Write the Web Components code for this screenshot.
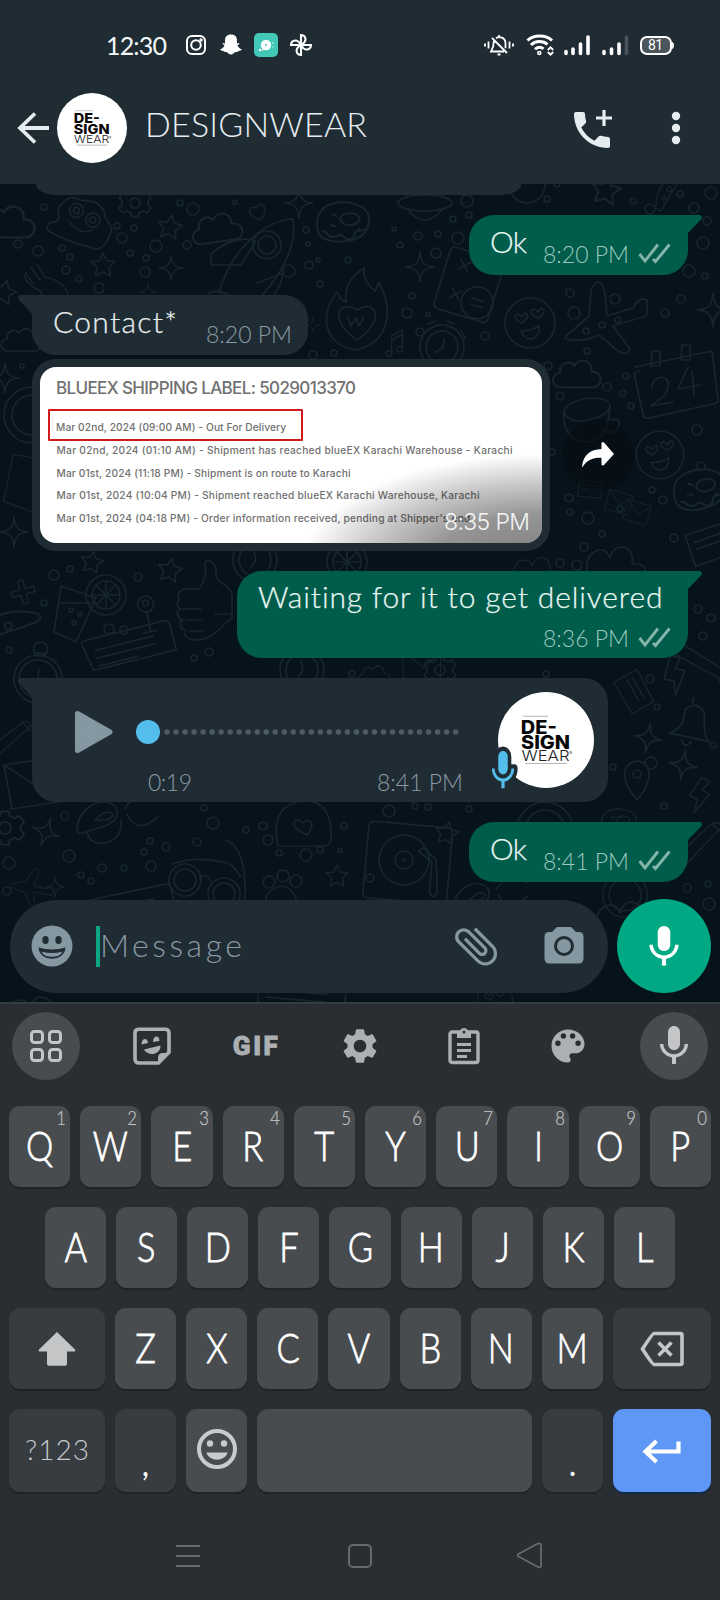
<!DOCTYPE html>
<html lang="en">
<head>
<meta charset="utf-8">
<title>DESIGNWEAR</title>
<style>
html,body{margin:0;padding:0;background:#292e32}
body{width:720px;height:1600px;overflow:hidden;font-family:Lato,"Liberation Sans",sans-serif}
</style>
</head>
<body>
<phone-screen></phone-screen>
<script>
const MIC = '<path d="M12 14c1.66 0 3-1.34 3-3V5c0-1.66-1.34-3-3-3S9 3.34 9 5v6c0 1.66 1.34 3 3 3z"/><path d="M17.3 11c0 3-2.54 5.1-5.3 5.1S6.7 14 6.7 11H5c0 3.41 2.72 6.23 6 6.72V21h2v-3.28c3.28-.48 6-3.3 6-6.72z"/>';

function define(name, html, setup) {
  customElements.define(name, class extends HTMLElement {
    connectedCallback() {
      if (this.shadowRoot) return;
      const root = this.attachShadow({ mode: 'open' });
      const t = document.createElement('template');
      t.innerHTML = typeof html === 'function' ? html(this) : html;
      root.append(t.content.cloneNode(true));
      if (setup) setup(this, root);
    }
  });
}

/* One line of text, tracked out or in to a given width */
define('fit-text', '<style>:host{display:inline-block;line-height:1;white-space:nowrap;flex:none}span{display:inline-block}</style><span><slot></slot></span>', (el, root) => {
  const w = parseFloat(el.getAttribute('w'));
  const s = root.querySelector('span');
  const natural = s.getBoundingClientRect().width;
  const n = el.textContent.length - 1;
  s.style.letterSpacing = ((w - natural) / n) + 'px';
  el.style.width = w + 'px';
});

/* Brand avatar */
define('brand-avatar', `<style>:host{display:block;flex:none}svg{display:block;width:100%;height:100%}text{font-family:Inter,Lato,sans-serif}</style>
<svg viewBox="0 0 96 96"><circle cx="48" cy="48" r="48" fill="#fff"/>
<path d="M25 24.300h25" stroke="#c0c0c0" stroke-width="1.200"/><path d="M27 71.500h42" stroke="#b5b5b5" stroke-width="1.200"/>
<g font-weight="800" font-size="18.500" fill="#080808"><text x="22.800" y="41.500" textLength="36" lengthAdjust="spacingAndGlyphs">DE-</text><text x="23" y="56.500" textLength="49" lengthAdjust="spacingAndGlyphs">SIGN</text></g>
<text x="23.500" y="69" font-size="15" font-weight="300" fill="#222" textLength="48" lengthAdjust="spacingAndGlyphs">WEAR</text><text x="71.300" y="63" font-size="4.500" fill="#444">®</text></svg>`);

/* System status bar */
define('status-bar', `<style>
:host{display:flex;height:90px;align-items:flex-start;color:#f4f7f8}
.l{display:flex;padding:31px 0 0 106px;gap:0;flex:1;align-items:center;height:28px}
.l fit-text{font:400 25px/1 Lato,sans-serif}
svg{display:block;flex:none}
.l svg:nth-of-type(1){margin-left:18px}
.l svg+svg{margin-left:13px}
.r{display:flex;align-items:center;padding:31px 45px 0 0;height:28px}
</style>
<div class="l"><fit-text w="61">12:30</fit-text>
<svg width="22" height="22" viewBox="0 0 22 22" fill="none" stroke="#fff" stroke-width="2"><rect x="2" y="2" width="18" height="18" rx="5"/><circle cx="11" cy="11" r="4.800"/><circle cx="16" cy="6" r=".8"/></svg>
<svg width="22" height="22" viewBox="0 0 22 22" fill="#fff"><path d="M11 .500c4.300 0 6 2.600 6 6v3l2-.6c1 .3.500 1.200-1.500 2 .5 2.300 2.300 3.800 4.300 4.300-.3 1.500-1.800 1.300-3.200 1.600-.3 1.500-1.600 1-2.800 1.100-1.800.2-2.600 2.700-4.800 2.700s-3-2.500-4.800-2.700c-1.200-.1-2.500.4-2.800-1.100-1.400-.3-2.900-.1-3.200-1.600 2-.5 3.800-2 4.300-4.300-2-.8-2.500-1.700-1.500-2l2 .6v-3c0-3.400 1.700-6 6-6z"/></svg>
<svg width="24" height="24" viewBox="0 0 24 24" style="margin-left:12px"><rect width="24" height="24" rx="5" fill="#41c8b6"/><circle cx="12" cy="12" r="5.200" fill="#fff"/><path d="M7 18l3-4 2 2zM17 7l2-1.500" fill="#fff"/><circle cx="6" cy="17" r="1.300" fill="#fff"/><path d="M18 10h1.500M18.500 14h1" stroke="#fff"/><circle cx="12" cy="12" r="1" fill="#41c8b6"/></svg>
<svg width="24" height="24" viewBox="0 0 24 24" style="margin-left:11px" fill="none" stroke="#fff" stroke-width="2.100"><path d="M12 12V2c4 0 5.800 4 3.500 7.200C14.500 10.500 13 11.500 12 12zh10c0 4-4 5.800-7.200 3.500C13.500 14.500 12.500 13 12 12zv10c-4 0-5.800-4-3.500-7.200C9.500 13.500 11 12.500 12 12zH2c0-4 4-5.800 7.200-3.500C10.500 9.500 11.500 11 12 12z"/></svg></div>
<div class="r">
<svg width="32" height="24" viewBox="0 0 32 24" fill="none" stroke="#fff" stroke-width="1.800"><path d="M2 10.500v3M5.500 8.500v7M30 10.500v3M26.500 8.500v7M9 5l15 15M11 8c-.6 1.500-.7 3-.7 5L8 18.500H21M13 5.300c3-2.300 9.500-1 9.500 5v5M16 2v2M14.500 21.500h3"/></svg>
<svg width="28" height="24" viewBox="0 0 28 24" style="margin-left:11px" fill="none" stroke="#fff" stroke-width="3"><path d="M1.500 7.500c6-6 18.500-6 24.500 0M5 12c4.500-4.500 12-4.500 16.500-.5M9 16.200c2.500-2.500 6-2.500 8.500-.3"/><circle cx="13.300" cy="20" r=".8"/><path d="M21.800 17l2.700-2.700 2.700 2.700M21.800 19l2.700 2.700 2.700-2.700" stroke-width="1.900"/></svg>
<svg width="28" height="24" viewBox="0 0 28 24" style="margin-left:9px" stroke="#fff" stroke-width="3.600" stroke-linecap="round"><path d="M3 18.500v2M10 16v4.500M17.500 11v9.500M25 4v16.500"/></svg>
<svg width="28" height="24" viewBox="0 0 28 24" style="margin-left:10px" stroke="#fff" stroke-width="3.600" stroke-linecap="round"><path d="M3 18.500v2M10.500 16v4.500M18 11v9.500"/><path d="M25.500 4v16.500" stroke="#47525a"/></svg>
<svg width="36" height="22" viewBox="0 0 36 22" style="margin-left:10px"><rect x="2" y="3" width="30" height="17" rx="6" fill="#4c555b" stroke="#fff" stroke-width="2"/><path d="M33 8.500c1.300 1.500 1.300 4 0 6" stroke="#fff" stroke-width="1.800" fill="none"/><text x="9" y="16.300" font-size="14" font-family="Roboto" fill="#fff" textLength="15">81</text></svg>
</div>`);

/* Conversation header */
define('chat-header', `<style>
:host{display:flex;height:94px;color:#e6edf0;align-items:flex-start;padding-left:17px}
svg{display:block;flex:none}
brand-avatar{width:70px;height:70px;margin:3px 0 0 8px}
h1{font-weight:300;font-size:34px;margin:17px 0 0 18px;line-height:1;flex:1}
</style>
<svg width="32" height="34" viewBox="0 0 32 34" style="margin-top:21px" fill="none" stroke="#e6edf0" stroke-width="3.800"><path d="M18 2.500L3 17l15 14.500M3 17h29"/></svg>
<brand-avatar></brand-avatar>
<h1><fit-text w="222">DESIGNWEAR</fit-text></h1>
<svg width="48" height="48" viewBox="0 0 48 48" style="margin-top:16px" fill="#e6edf0"><path transform="scale(2)" d="M20 15.500c-1.250 0-2.450-.2-3.570-.57-.35-.11-.74-.03-1.020.24l-2.200 2.200c-2.830-1.440-5.150-3.750-6.590-6.590l2.200-2.210c.28-.26.36-.65.25-1C8.700 6.450 8.500 5.250 8.500 4c0-.55-.45-1-1-1H4c-.55 0-1 .45-1 1 0 9.390 7.610 17 17 17 .55 0 1-.45 1-1v-3.500c0-.55-.45-1-1-1z"/><path d="M36 4v16M28 12h16" stroke="#e6edf0" stroke-width="3.200"/></svg>
<svg width="10" height="34" viewBox="0 0 10 34" style="margin:21px 39px 0 55px" fill="#e6edf0"><circle cx="5" cy="5" r="4.200"/><circle cx="5" cy="17" r="4.200"/><circle cx="5" cy="29" r="4.200"/></svg>`);

/* Doodle wallpaper */
function wallpaper() {
  const o = [];
  const at = (x, y, s, r, d) => o.push(`<g transform="translate(${x} ${y}) rotate(${r}) scale(${s})">${d}</g>`);
  const p = d => `<path d="${d}"/>`, c = (x, y, r) => `<circle cx="${x}" cy="${y}" r="${r}"/>`;
  const K = {
    star: p('M0-12l3.500 7.500 8.500 1-6 6 1.500 8.500L0 7l-7.500 4L-6 2.500l-6-6 8.500-1z'),
    spark: p('M0-15C1-4 4-1 14 0 4 1 1 4 0 15-1 4-4 1-14 0-4-1-1-4 0-15z'),
    cloud: p('M-14 11c-9 0-9-11-1-12-1-8 8-11 12-6 5-8 16-3 14 5 11 0 10 13 1 13z'),
    heart: p('M0 9C-16-1-6-12 0-5 6-12 16-1 0 9z'),
    gear: c(0, 0, 5) + p('M-3-14h6l1 4 4 2 4-2 4 5-3 3v4l3 3-4 5-4-2-4 2-1 4h-6l-1-4-4-2-4 2-4-5 3-3v-4l-3-3 4-5 4 2 4-2z'),
    smile: c(0, 0, 25) + p('M-8 0c-13-5-5-13 0-6 3-8 11-1 0 6zM8-5c-13-5-5-13 0-6 3-8 12-1 0 6zM-9 8q10 0 18-5c2 15-15 17-18 5z'),
    donut: p('M-20-12c10-12 40-8 40 7 0 9-4 14-12 17-14 4-30 2-31-9-1-6 0-11 3-15z') + p('M-19 5c5 0 4 5 9 5s5-4 9 0 9 1 9-3 9 0 11-6') + `<ellipse cx="4" cy="-5" rx="8" ry="5"/>` + p('M-10-9l3 2M-12 0l4 1M12 3l-3 3'),
    clock: c(0, 0, 22) + c(0, 0, 16) + p('M-1-9l2 9-5 7M-15-22l-6 5M12-22l7 6M-4-26h8'),
    glass: p('M-17-24L18-12-2 32-24 22zM-17-7h35') + c(-7, 0, 2) + c(2, 4, 2) + c(-4, 13, 2),
    orange: c(0, 0, 20) + c(0, 0, 14) + p('M0-14v28M-14 0h28M-10-10l20 20M10-10l-20 20'),
    thumb: p('M-25 0c-3-8 3-12 10-11h10c6-8 8-17 6-27 8-6 12 7 11 15 3 5 14 10 16 17v25c-8 2-9 10-20 16-5 3-10 5-16 5-12 0-13-8-10-10-6 0-8-8-3-10-7-2-7-10-2-11-4-2-5-6-2-9zM-21 9h18M-18 20h16M-15 31h14M11 14h16'),
    card: p('M-45-14q-2-6 4-6h80q6 0 6 6v25H-40zM-34-8h60M-34 0h60M-34 8h40'),
    ufo: p('M-30 8C-28-8-14-20 0-18 14-14 14 0-2 6l-22 7q-7 2-6-5zM-12 0q12-12 18-6-2 8-18 6zM-20 12c4 20 38 12 34-12M18-12q16-22 34-7M20-6q10 22 32 2'),
    glasses: c(-20, 0, 16) + c(-20, 0, 11) + c(19, 14, 16) + c(19, 14, 11) + p('M-6-2q8-6 12 4M-32-16q20-8 50-2c10 1 12 8 18 15M20-40q22 6 20 60'),
    plane: p('M-6-30q10-18 14 4l2 22 26-8q6-12 14-8v9q2 6-4 8L16 6l17 23q-4 8-12 2L2 15q-12 6-26 5-14 0-2-8L-8-4z'),
    cal: p('M-37-8L40-24l6 48q1 4-5 5l-64 14q-5 1-6-4l-8-36q-2-6 4-7M-20-24h8v15h-9zM10-30h8v15h-9z') + p('M-20 13c0-14 18-14 16-2 0 10-10 14-17 20l22-4M16-8L6 14l22-4M20-4l2 24'),
    cup: p('M-26-8q2-10 24-14 22 0 22 8-2 26-12 32-12 8-24 0-12-8-10-26zM-26-8q4 12 24 8 20-4 22-14M20 0q13-3 8 8-6 8-14 2'),
    rocket: p('M-28 30C-20-2 10-42 46-44 52-10 20 34-2 46M-28 30q14 0 26 16M-36-9q24-20 45-13L-6 2h-30zM14 42q20-12 22-32L10 20') + c(20, -18, 14) + c(20, -18, 9) + p('M-46 48q4-26 24-18 15 6 13 22'),
    flame: p('M0 40c-34-4-38-36-20-58 4 8 5 9 9 10-2-17 6-26 18-34-2 12 6 19 11 23l4-8c14 25 12 58-22 67z') + p('M0 30C-30 10-18-12 0 0 18-12 30 10 0 30zM-9 7l3 9 5-8 3 8 5-9'),
    rocketbag: p('M-24 22q-8-36 18-44 28-6 34 20 4 22-4 24zM-4 6c-10-8 0-14 5-7 6-7 14 1 4 12z'),
    turntable: p('M-38-30q0-6 6-6h72q6 0 6 6v66q0 5-5 5h-74q-5 0-5-5z') + c(0, 0, 25) + c(0, 0, 9) + c(0, 0, 1) + p('M14-10l14 10v30q4 8 8 0L32-3 18-14z'),
    bell: p('M-16 12Q-4 4-8-12 0-24 10-14 14 6 20 10zM-4 15q5 8 9-1M-3-20v-5'),
    pin: p('M0 20Q-18-2-10-14q10-10 20 0 7 14-10 34z') + c(0, -6, 4),
    bag: p('M-26-28h50l8 20-16 48-44-8z'),
    env: p('M-28-18l54-8 6 44-52 8zM-28-18L6 4l20-30'),
    bolt: p('M-8-18h10L-1-6h10L4 20l-4-14h-10z'),
    watch: c(0, 0, 24) + c(0, 0, 19) + c(0, -30, 7) + p('M-4-22v-4h8v4M0-10v14M0 4l8-6'),
    paw: p('M-16 20q-6-16 14-22 16 2 16 22z') + c(-14, -6, 6) + c(0, -12, 6) + c(13, -7, 6),
    poop: p('M-22 20q-10-2-4-10 10-2 6-10-3-6 2-12 6-10 18-6 16-4 24 6 2 6 6 10 8 4 4 14-3 18-16 14-25-1-40-6z') + c(-3, -7, 7) + c(-3, -7, 3) + c(15, -1, 7) + c(15, -1, 3) + p('M-8 5q12 12 24 4'),
    planet: `<ellipse rx="27" ry="8"/>` + p('M-18-6q2-16 18-16t18 16M-16 8q16 18 32 0'),
    moon: p('M-16-6a18 18 0 1 0 24-16 20 20 0 0 1-24 16z'),
    note: p('M-6 12V-8l12-7v20M-6-3l12-7') + c(-9, 12, 3) + c(3, 7, 3),
    calc: p('M-24-32h46q5 0 5 5v54q0 5-5 5h-46q-5 0-5-5v-54q0-5 5-5zM-16-22l10 10M-6-22l-10 10M6-17h12M-16 8l10 10M-6 8l-10 10') + c(12, 15, 16) + p('M6 12h12M6 18h12'),
    fist: p('M-30 30q-8-20 4-28 12-6 16 6 4-14 16-10 8 4 6 16 14-2 14 12'),
    wine: c(0, -8, 8) + c(0, -9, 3) + p('M0 0v20M-7 20h14'),
    plus: p('M-3-13h6v10h10v6H3v10h-6V3h-10v-6h10z'),
    pizza: p('M-22 16q10-30 44-34 6 2 0 8L-18 22z') + c(2, 0, 3) + c(-8, 8, 2),
    hand: p('M-16-8l8 12M-10-14l10 14M-3-17l9 14M6-3q24 4 28 28M-16-8q-4 10 16 20l6 10'),
    book: p('M-26-12l44-10 8 30-44 12zM-18-4l28-7M-16 3l28-7'),
    pencil: p('M-40 16L24-18q8-2 10 6L-28 26l-14 2zM24-18l8 12'),
    ring: c(0, 0, 28) + c(0, 0, 20)
  };
  const items = [
    ['star',170,227,1,10],['star',103,265,1,0],['star',4,292,1,15],['star',170,570,1,10],['star',92,562,.9,10],['star',337,876,.9,0],['star',447,833,.95,10],['star',606,190,1.2,10],
    ['spark',299,203,1,0],['spark',171,268,.85,0],['spark',14,532,1,0],['spark',420,267,1,0],['spark',713,310,1.1,0],['spark',46,832,1,20],['spark',55,887,.7,0],['spark',648,738,1,10],['spark',683,765,1,10],['spark',148,292,.6,0],['spark',313,325,.5,0],
    ['cloud',218,228,1.250,-8],['cloud',8,222,1.400,0],['cloud',22,340,1,0],['cloud',578,374,1.200,0],['cloud',375,675,.8,0],
    ['gear',135,203,1,0],['gear',5,828,1.200,0],['heart',258,212,.9,-25],['poop',78,218,1,12],['rocket',247,263,1,0],['donut',345,225,1.200,0],['donut',702,492,1.200,-10],['flame',357,310,1,0],['hand',40,280,.9,0],
    ['planet',425,203,1,0],['moon',525,190,1,0],['pizza',668,190,.8,-20],['calc',470,285,1,17],['smile',530,323,1,0],['smile',660,455,.95,0],['clock',442,347,1,20],['note',397,343,.9,0],['plane',597,320,1,0],['cal',672,375,1,0],['cup',590,420,1,0],['fist',620,550,1,0],['book',712,545,1,-5],
    ['glass',78,610,1,0],['orange',106,595,1,0],['wine',147,612,1,-10],['thumb',204,600,1,0],['card',130,650,1,-14],['watch',38,679,1,5],['clock',302,670,1,0],['pizza',6,625,1.200,20],['plus',23,592,.9,-15],
    ['ufo',107,820,1,0],['rocketbag',302,824,1,0],['glasses',205,880,1,0],['paw',283,888,1,0],['env',32,783,1,0],['pencil',6,740,.8,-10],['turntable',404,860,1,5],['bell',690,725,1.100,15],['pin',637,780,1,0],['bolt',675,675,1,10],
    ['book',633,692,.8,75],['donut',620,824,.8,0],['ring',545,830,1,0],['fist',630,905,1,0],['pencil',695,845,.9,-15],['card',130,912,1,-12],['ring',32,415,1,0],['bag',30,480,.8,10],['pencil',700,660,.9,60],['clock',255,560,1,0],['orange',347,562,1,0],['gear',440,670,1,0],['fist',540,560,.8,0],['spark',5,378,1,0],['book',590,490,.5,20],['env',618,502,.45,25],['env',636,512,.45,25],['smile',495,1000,.7,0],['fist',40,1000,1,0],['card',300,1000,1,5],['plane',28,885,.5,30],['env',420,665,.7,8],['ring',625,895,.8,0],['ufo',480,900,.9,0],['bolt',700,795,.9,30]
  ];
  for (const [k, x, y, s, r] of items) if (K[k]) at(x, y, s, r, K[k]);
  const dots = '44,207,3 193,209,6 180,203,3 235,202,2 117,226,3 134,228,3 122,238,5 156,246,6 187,245,4 62,248,3 18,244,4 38,251,5 70,257,3 66,270,4 79,279,3 99,288,5 130,253,3 146,258,3 145,272,5 306,230,3 308,244,2 318,260,2 309,265,4 289,271,6 348,260,3 320,284,3 313,355,4 334,353,3 22,366,2 467,201,6 469,215,3 453,219,3 394,229,2 418,236,4 438,234,3 458,238,6 400,245,3 436,253,5 547,199,3 557,184,3 633,201,3 650,209,5 680,194,3 711,193,6 694,208,5 707,221,4 703,243,6 689,271,6 705,276,3 412,296,3 407,313,5 428,314,2 485,336,4 420,332,4 570,293,4 574,313,6 615,299,5 602,325,3 618,320,3 586,331,3 665,313,4 681,299,4 587,351,3 548,366,4 626,376,3 607,387,4 623,393,3 631,406,3 560,396,4 552,452,3 697,430,5 701,466,4 569,498,4 570,512,3 588,518,6 652,490,3 663,500,4 620,509,3 602,534,3 674,538,4 584,547,4 54,575,5 70,569,3 138,577,4 44,603,3 109,629,5 124,630,4 9,650,3 194,658,3 209,652,4 352,674,3 65,816,4 204,808,3 213,823,6 246,830,3 263,826,4 268,840,5 279,853,3 306,855,6 320,850,3 340,850,2 344,826,3 150,841,3 166,847,4 197,842,4 144,852,3 69,856,6 102,868,4 124,868,3 151,866,5 81,875,3 91,881,3 9,863,6 7,891,4 650,679,4 657,707,3 546,674,3 713,745,3 651,763,6 613,767,3 664,806,3 389,811,6 415,806,3 428,807,3 469,809,3 370,878,4 687,888,4 708,884,3 709,904,6 698,609,4 711,618,4 703,636,4 560,563,4 577,565,5';
  for (const d of dots.split(' ')) { const [x, y, r] = d.split(','); o.push(c(x, y, r)); }
  return o.join('');
}
define('doodle-wallpaper', () => `<style>:host{display:block;position:absolute;inset:0;background:#06131a;overflow:hidden}svg{display:block}</style>
<svg width="720" height="818" viewBox="0 184 720 818" fill="none" stroke="#17252c" stroke-width="1.700" stroke-linejoin="round" stroke-linecap="round">${wallpaper()}</svg>`);

define('double-tick', `<style>:host{display:block;flex:none}svg{display:block}</style><svg width="34" height="22" viewBox="0 0 34 22" fill="none" stroke="#83b5a9" stroke-width="2.900"><path d="M1.500 12l5.500 7L20 2.500M15 17l2.500 2.500L31.500 2.500"/></svg>`);

/* Message bubble: the side attribute says who sent it */
define('chat-bubble', `<style>
:host{display:flex;position:relative;box-sizing:border-box;align-self:flex-start;margin-left:32px;background:#1f2c34;color:#e6edf0;border-radius:24px;--stamp:#8b9ba4}
:host([side=out]){align-self:flex-end;margin-left:0;margin-right:32px;background:#005c4b;color:#e9f7f2;border-radius:25px 0 25px 25px;--stamp:#9ac8bd}
:host([side=in]){border-top-left-radius:0}
svg{position:absolute;top:0;display:none}
:host([side=out]) .o{display:block;left:calc(100% - 1px)}
:host([side=in]) .i{display:block;right:calc(100% - 1px)}
</style><svg class="o" width="16" height="22" viewBox="0 0 16 22"><path d="M0 0h13q3 1 1.500 4L1 18v2H0z" fill="#005c4b"/></svg><svg class="i" width="16" height="22" viewBox="0 0 16 22"><path d="M16 0H3Q-.5 1 1.500 4.500L15 19v2h1z" fill="#1f2c34"/></svg><slot></slot>`);

define('time-stamp', el => `<style>:host{display:flex;font-size:23px;font-weight:300;color:var(--stamp,#8496a0);gap:9px;line-height:1}fit-text{height:23px;margin-top:1px}</style><fit-text w="86">${el.getAttribute('time')}</fit-text>${el.hasAttribute('ticks') ? '<double-tick></double-tick>' : ''}`);

define('text-message', el => `<style>
:host{display:flex;flex:1;padding:11px 0 0 21px;justify-content:space-between}
fit-text{font-size:30px;font-weight:300;-webkit-text-stroke:.25px}
time-stamp{margin:16px 0 0}
:host([ticks]) time-stamp{margin-right:16px}
:host(:not([ticks])) time-stamp{margin-right:16px}
:host([wide]){flex-direction:column;padding-top:10px;justify-content:flex-start}
:host([wide]) time-stamp{align-self:flex-end;margin-top:15px}
</style><fit-text w="${el.getAttribute('w')}">${el.getAttribute('text')}</fit-text><time-stamp time="${el.getAttribute('time')}" ${el.hasAttribute('ticks') ? 'ticks' : ''}></time-stamp>`);

/* Photo message holding the tracking label */
define('label-photo', `<style>
:host{display:block;position:relative;width:502px;height:176px;margin:8px;border-radius:16px;background:#fff;overflow:hidden;color:#707070;font-family:Inter,sans-serif}
h2{margin:13px 0 0 16px;font:500 17px/1 Inter,sans-serif;color:#707070;height:17px}
ol{list-style:none;margin:12px 0 0 8px;padding:0}
li{height:22.700px;padding-left:8.500px;font-size:10.200px;font-weight:500;line-height:1;box-sizing:border-box;display:flex;align-items:flex-start;padding-top:4px}
li:first-child{height:32px;width:255px;border:2.500px solid #d01a1c;padding:11px 0 0 6px;margin-bottom:0;border-radius:1px}
.shade{position:absolute;inset:0;background:radial-gradient(ellipse 240px 110px at 100% 112%,rgba(0,0,0,.5),rgba(0,0,0,.42) 45%,rgba(0,0,0,.2) 75%,transparent)}
time-stamp{position:absolute;right:12px;bottom:9px;--stamp:#f3f5f6}
</style><h2><fit-text w="300">BLUEEX SHIPPING LABEL: 5029013370</fit-text></h2>
<ol><li><fit-text w="230">Mar 02nd, 2024 (09:00 AM) - Out For Delivery</fit-text></li><li><fit-text w="456">Mar 02nd, 2024 (01:10 AM) - Shipment has reached blueEX Karachi Warehouse - Karachi</fit-text></li><li><fit-text w="294">Mar 01st, 2024 (11:18 PM) - Shipment is on route to Karachi</fit-text></li><li><fit-text w="423">Mar 01st, 2024 (10:04 PM) - Shipment reached blueEX Karachi Warehouse, Karachi</fit-text></li><li><fit-text w="417">Mar 01st, 2024 (04:18 PM) - Order information received, pending at Shipper's end.</fit-text></li></ol>
<div class="shade"></div><time-stamp time="8:35 PM"></time-stamp>`);

define('voice-note', `<style>
:host{display:flex;flex:1;padding:0 14px 0 43px;color:#8b9ba4}
.play{margin-top:32px;flex:none;display:block}
.mid{width:318px;margin-left:17px;flex:none}
.mid>svg{display:block;margin-top:41px}
.t{display:flex;justify-content:space-between;font-size:23px;font-weight:300;margin:25px -13px 0 16px}
.t>fit-text{margin-top:1px}
.a{position:relative;margin:14px 0 0 auto;width:96px;height:96px}
brand-avatar{width:96px;height:96px}
.a svg{position:absolute;left:-14px;top:55px;overflow:visible}
</style>
<svg class="play" width="40" height="44" viewBox="0 0 40 44"><path d="M2.500 3.500v37L35 22z" fill="#8597a1" stroke="#8597a1" stroke-width="5" stroke-linejoin="round"/></svg>
<div class="mid"><svg width="330" height="26" viewBox="0 0 330 26"><path d="M35 13H324" stroke="#4d5b63" stroke-width="5.500" stroke-linecap="round" stroke-dasharray="0 9.020"/><circle cx="16" cy="13" r="12" fill="#53bdeb"/></svg>
<div class="t"><fit-text w="44">0:19</fit-text><time-stamp time="8:41 PM"></time-stamp></div></div>
<div class="a"><brand-avatar></brand-avatar><svg width="38" height="47" viewBox="0 0 24 24" preserveAspectRatio="none" fill="#53bdeb"><g stroke="#1f2c34" stroke-width="4.500" stroke-linejoin="round">${MIC}</g>${MIC}</svg></div>`);

define('message-input', `<style>
:host{display:flex;padding:0 9px 0 10px;margin-top:17px;gap:9px;align-items:center;position:relative}
.f{display:flex;align-items:center;width:598px;height:93px;border-radius:46.500px;background:#1f2c34;color:#8b9ba4;margin-top:1px}
svg{display:block;flex:none}
i{width:4px;height:41px;background:#0aa683;margin-left:23px}
fit-text{font-size:32px;font-weight:300;margin-top:-4px}
.m{width:94px;height:94px;border-radius:50%;background:#00a884;display:grid;place-items:center}
</style><div class="f">
<svg width="42" height="42" viewBox="0 0 42 42" style="margin-left:21px;margin-top:-1px" fill="#8597a1"><circle cx="21" cy="21" r="20.500"/><g fill="#1f2c34"><ellipse cx="14.500" cy="15" rx="3.200" ry="4"/><ellipse cx="27.500" cy="15" rx="3.200" ry="4"/><path d="M7.500 22.500q13.500 4 27 0c-1 15-26 15-27 0z"/></g><path d="M10.500 26.500q10.500 3 21 0-1.200 3-4 4.200-6.500 2-13 0-2.800-1.200-4-4.200z"/></svg>
<i></i><fit-text w="142">Message</fit-text>
<svg width="52" height="52" viewBox="0 0 24 24" style="margin-left:208px;margin-top:-2px" fill="#8597a1"><path transform="rotate(-45 12 12)" d="M16.500 6v11.500c0 2.210-1.790 4-4 4s-4-1.790-4-4V5c0-1.380 1.120-2.500 2.500-2.500s2.500 1.120 2.500 2.500v10.500c0 .55-.45 1-1 1s-1-.45-1-1V6H10v9.500c0 1.380 1.120 2.500 2.500 2.500s2.500-1.120 2.500-2.500V5c0-2.210-1.790-4-4-4S7 2.790 7 5v12.500c0 3.040 2.460 5.500 5.500 5.500s5.500-2.460 5.500-5.500V6z"/></svg>
<svg width="40" height="38" viewBox="0 0 40 38" style="margin-left:42px;margin-top:-3px" fill="#8597a1"><path d="M13 1h14l5 5h3q4.500 0 4.500 5v21q0 5.500-5 5.500h-29q-5 0-5-5.500V11q0-5 4.500-5h3z"/><circle cx="20" cy="20" r="8.500" stroke="#1f2c34" stroke-width="3"/></svg>
</div><div class="m"><svg width="50" height="50" viewBox="0 0 24 24" fill="#fff"><g transform="translate(0 .4)">${MIC}</g></svg></div>`);

define('chat-thread', `<style>
:host{display:flex;flex-direction:column;position:relative;height:818px;overflow:hidden}
.prev{width:485px;height:10.500px;margin-left:36px;border-radius:0 0 22px 22px/0 0 10px 10px}
.row{display:flex;align-items:center;gap:0;position:relative}
.fwd{width:72px;height:72px;border-radius:50%;background:rgba(8,13,20,.55);display:grid;place-items:center;margin-left:12px}
</style><doodle-wallpaper></doodle-wallpaper>
<chat-bubble class="prev"></chat-bubble>
<chat-bubble side="out" style="width:219px;height:60px;margin-top:20.500px"><text-message text="Ok" w="37" time="8:20 PM" ticks></text-message></chat-bubble>
<chat-bubble side="in" style="width:276px;height:60px;margin-top:20px"><text-message text="Contact*" w="124" time="8:20 PM"></text-message></chat-bubble>
<div class="row" style="margin-top:4px;height:192px"><chat-bubble style="width:518px;height:192px"><label-photo></label-photo></chat-bubble>
<div class="fwd"><svg width="34" height="28" viewBox="0 0 34 28" fill="#fff"><path d="M1 26C2 14 9 8.500 20.500 8V2q1-1.500 2.500-.5L33 13 23 24q-2 1-2.500-.5v-6.800C11 16.500 6 19 1.500 26z"/></svg></div></div>
<chat-bubble side="out" style="width:451px;height:87px;margin-top:20px"><text-message wide text="Waiting for it to get delivered" w="405" time="8:36 PM" ticks></text-message></chat-bubble>
<chat-bubble side="in" style="width:576px;height:124px;margin-top:20px"><voice-note></voice-note></chat-bubble>
<chat-bubble side="out" style="width:219px;height:60px;margin-top:20px"><text-message text="Ok" w="37" time="8:41 PM" ticks></text-message></chat-bubble>
<message-input></message-input>`);

/* One keyboard key */
define('key-cap', el => `<style>
:host{display:flex;align-items:center;justify-content:center;flex:1 1 0;position:relative;background:#494c4f;border-radius:11px;box-shadow:0 2px 1px #1f2427;color:#fff;font-size:42px;line-height:1;min-width:0}
:host([dark]){background:#373c40}
:host([enter]){background:#5e97f6;box-shadow:0 2px 1px #12284d}
:host([side]){flex:none;width:96px}
:host([side=r]){width:98px}
b{position:absolute;right:4px;top:2px;font-size:19px;font-weight:300;color:#c3c6c8;-webkit-text-stroke:.2px}
b i{display:block;font-style:normal;transform:scaleX(.88);transform-origin:100% 0}
span{transform:scaleX(.82);font-weight:300;-webkit-text-stroke:.8px;margin-top:-4px}
</style>${el.getAttribute('hint') ? `<b><i>${el.getAttribute('hint')}</i></b>` : ''}${el.getAttribute('k') ? `<span>${el.getAttribute('k')}</span>` : ''}<slot></slot>`);

define('key-board', () => {
  const keys = (s, h) => [...s].map((k, i) => `<key-cap k="${k}" ${h ? `hint="${h[i]}"` : ''}></key-cap>`).join('');
  return `<style>
:host{display:flex;flex-direction:column;height:598px;background:#292e32;border-top:2px solid #333c41;box-sizing:border-box}
svg{display:block}
.bar{display:flex;justify-content:space-between;padding:8px 12px 0;height:68px}
.bar>div{width:68px;height:68px;border-radius:50%;display:grid;place-items:center}
.bar .on{background:#494c4f}
.gif{font:900 26px/1 Roboto,sans-serif;color:#adb0b3;-webkit-text-stroke:.8px}
.row{display:flex;gap:10px;padding:0 9px;height:81px;margin-top:20px}
.row:nth-of-type(2){margin-top:26px}
.row.in{padding:0 45px}
.row.last{height:83px}
.sym{font-size:28px;font-weight:300;color:#c8cacc;margin-top:-3px}
.pt{margin-top:26px;font-size:32px}
.nav{display:flex;align-items:center;padding:50px 177px 0 176px;justify-content:space-between;height:27px}
</style>
<div class="bar">
<div class="on"><svg width="34" height="34" viewBox="0 0 34 34" fill="none" stroke="#c3c5c7" stroke-width="3"><rect x="2.500" y="2.500" width="11" height="11" rx="3"/><rect x="20.500" y="2.500" width="11" height="11" rx="3"/><rect x="2.500" y="20.500" width="11" height="11" rx="3"/><rect x="20.500" y="20.500" width="11" height="11" rx="3"/></svg></div>
<div><svg width="38" height="38" viewBox="0 0 38 38" style="margin-left:3px"><path d="M6 2.200h26q4 0 4 4v19L25.500 36H6q-4 0-4-4V6q0-3.800 4-3.800z" fill="none" stroke="#adb0b3" stroke-width="3.600"/><path d="M25 37v-6q0-5 5-5h7zM8.500 17.500c0-7 6.500-7 6.500-1.500zM20 15c0-7 6.500-7 6.500-1zM11 22.500l16.500-4c0 10-13 11-16.500 4z" fill="#adb0b3"/></svg></div>
<div class="gif"><fit-text w="45">GIF</fit-text></div>
<div><svg width="42" height="42" viewBox="0 0 24 24" fill="#adb0b3"><path d="M19.140 12.940c.04-.3.06-.61.06-.94 0-.32-.02-.64-.07-.94l2.030-1.580c.18-.14.23-.41.12-.61l-1.920-3.320c-.12-.22-.37-.29-.59-.22l-2.390.96c-.5-.38-1.030-.7-1.620-.94l-.36-2.540c-.04-.24-.24-.41-.48-.41h-3.840c-.24 0-.43.17-.47.41l-.36 2.540c-.59.24-1.130.57-1.620.94l-2.390-.96c-.22-.08-.47 0-.59.22L2.740 8.870c-.12.21-.08.47.12.61l2.030 1.580c-.05.3-.09.63-.09.94s.02.64.07.94l-2.030 1.580c-.18.14-.23.41-.12.61l1.920 3.320c.12.22.37.29.59.22l2.390-.96c.5.38 1.030.7 1.620.94l.36 2.540c.05.24.24.41.48.41h3.840c.24 0 .44-.17.47-.41l.36-2.540c.59-.24 1.130-.56 1.620-.94l2.390.96c.22.08.47 0 .59-.22l1.920-3.320c.12-.22.07-.47-.12-.61zM12 15.600c-1.980 0-3.600-1.620-3.600-3.600s1.620-3.600 3.600-3.600 3.600 1.620 3.600 3.600-1.620 3.600-3.600 3.600z"/></svg></div>
<div><svg width="32" height="38" viewBox="0 0 32 38" fill="none" stroke="#adb0b3" stroke-width="3.400" style="margin-left:-2px"><rect x="2" y="5" width="28" height="30.500" rx="2"/><path d="M9 17.500h14M9 23.500h14M9 29.500h10" stroke-width="3"/><path d="M9 4h3a4.200 4.200 0 0 1 8 0h3v7H9z" fill="#adb0b3" stroke="none"/><circle cx="16" cy="5" r="1.500" fill="#292e32" stroke="none"/></svg></div>
<div><svg width="44" height="44" viewBox="0 0 24 24" fill="#adb0b3" style="margin-left:-2px"><path d="M12 3a9 9 0 0 0 0 18c.83 0 1.500-.67 1.500-1.500 0-.39-.15-.74-.39-1.010-.23-.26-.38-.61-.38-.99 0-.83.67-1.500 1.500-1.500H16c2.760 0 5-2.240 5-5 0-4.420-4.030-8-9-8zm-5.500 9a1.500 1.500 0 1 1 0-3 1.500 1.500 0 0 1 0 3zm3-4a1.500 1.500 0 1 1 0-3 1.500 1.500 0 0 1 0 3zm5 0a1.500 1.500 0 1 1 0-3 1.500 1.500 0 0 1 0 3zm3 4a1.500 1.500 0 1 1 0-3 1.500 1.500 0 0 1 0 3z"/></svg></div>
<div class="on"><svg width="48" height="48" viewBox="0 0 24 24" fill="#c3c5c7">${MIC}</svg></div>
</div>
<div class="row">${keys('QWERTYUIOP', '1234567890')}</div>
<div class="row in">${keys('ASDFGHJKL')}</div>
<div class="row"><key-cap dark side="l"><svg width="38" height="36" viewBox="0 0 38 36" fill="#c3c5c7"><path d="M19 1l18 17.500q1 2-1 2h-7V33q0 1.800-2 1.800H11q-2 0-2-1.800V20.500H2q-2 0-1-2z"/></svg></key-cap>${keys('ZXCVBNM')}<key-cap dark side="r"><svg width="44" height="36" viewBox="0 0 44 36" fill="none" stroke="#c3c5c7" stroke-width="3.600"><path d="M14 2.500h26.500q1.500 0 1.500 1.500v28q0 1.500-1.500 1.500H14Q12.500 33.500 2.500 18 12.500 2.500 14 2.500zM18.500 11.500l13 13M31.500 11.500l-13 13"/></svg></key-cap></div>
<div class="row last"><key-cap dark side="l"><fit-text class="sym" w="64">?123</fit-text></key-cap><key-cap dark><div class="pt">,</div></key-cap><key-cap><svg width="42" height="42" viewBox="0 0 42 42" style="margin-top:-3px"><circle cx="21" cy="21" r="18" fill="none" stroke="#c8cacc" stroke-width="4"/><g fill="#c8cacc"><circle cx="14" cy="15.500" r="3.200"/><circle cx="28" cy="15.500" r="3.200"/><path d="M10.500 24.500h21c-2 9.500-19 9.500-21 0z"/></g></svg></key-cap><key-cap style="flex:none;width:275px"></key-cap><key-cap dark><div class="pt">.</div></key-cap><key-cap enter side="r"><svg width="40" height="26" viewBox="0 0 40 26" fill="none" stroke="#fff" stroke-width="4.200" style="margin-top:2px"><path d="M14.500 2L3.500 12.500l11 10.500M3.500 12.500H36.500V2.500"/></svg></key-cap></div>
<div class="nav"><svg width="24" height="26" viewBox="0 0 24 26" stroke="#666b6f" stroke-width="2"><path d="M0 3h24M0 13h24M0 23h24"/></svg><svg width="26" height="26" viewBox="0 0 26 26" fill="none" stroke="#666b6f" stroke-width="2" style="margin-left:3px"><rect x="2" y="2" width="22" height="22" rx="4"/></svg><svg width="27" height="27" viewBox="0 0 27 27" fill="none" stroke="#666b6f" stroke-width="1.800" stroke-linejoin="round"><path d="M22 1.500q3-.5 3 2v20q0 2.500-3 1.500L2.500 14.500q-2-1.200 0-2.500z"/></svg></div>`;
});

define('phone-screen', `<style>:host{display:block;width:720px;height:1600px;overflow:hidden}header{background:#1f2c34}</style>
<header><status-bar></status-bar><chat-header></chat-header></header><chat-thread></chat-thread><key-board></key-board>`);
</script>
</body>
</html>
